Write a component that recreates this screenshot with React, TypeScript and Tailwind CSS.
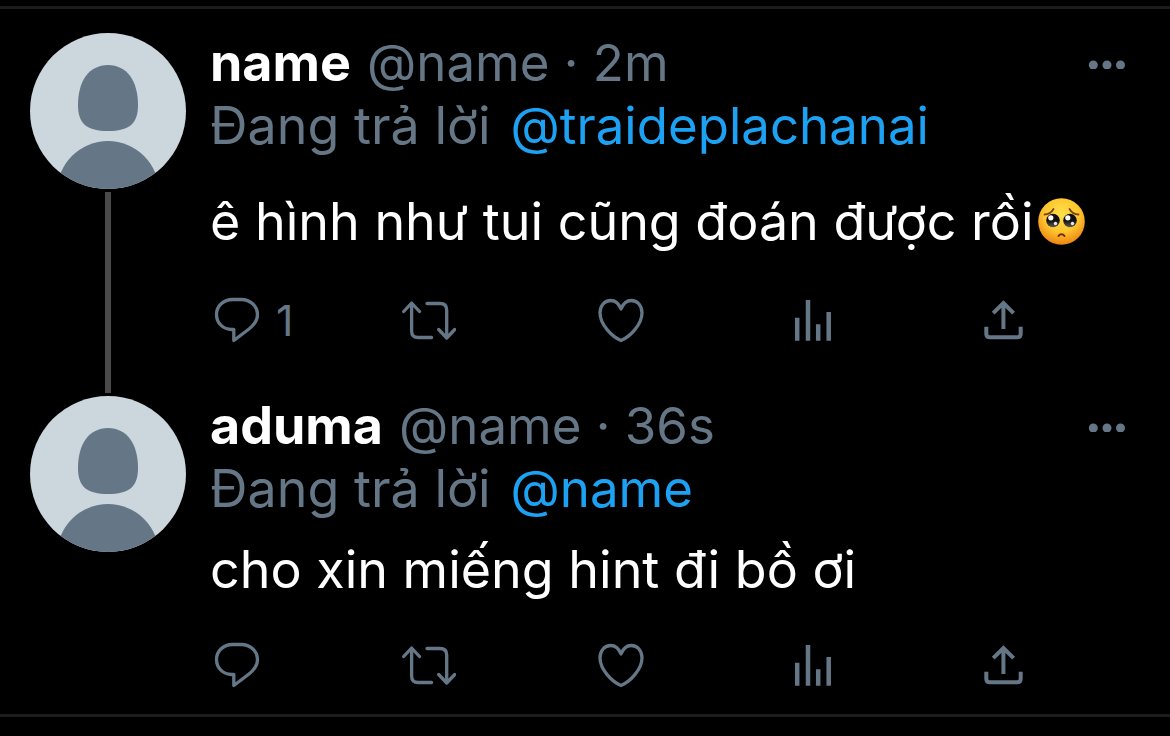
import type { ReactNode } from "react";

type Tweet = {
  id: number;
  name: string;
  handle: string;
  age: string;
  replyingTo: string;
  text: string;
  pleading?: boolean;
  replies?: number;
};

const TWEETS: Tweet[] = [
  {
    id: 1,
    name: "name",
    handle: "@name",
    age: "2m",
    replyingTo: "@traideplachanai",
    text: "ê hình như tui cũng đoán được rồi",
    pleading: true,
    replies: 1,
  },
  { id: 2, name: "aduma", handle: "@name", age: "36s", replyingTo: "@name", text: "cho xin miếng hint đi bồ ơi" },
];

function Avatar() {
  return (
    <svg viewBox="0 0 156 156" className="size-39 shrink-0 rounded-full bg-[#ccd6dd]" aria-hidden>
      <path
        d="M78 32c19 0 30 16 30 40 0 19-9 26-30 26s-30-7-30-26c0-24 11-40 30-40Z"
        fill="#657786"
      />
      <circle cx="78" cy="159" r="51" fill="#657786" />
    </svg>
  );
}

function PleadingFace() {
  return (
    <svg viewBox="0 0 48 48" className="ml-1 inline-block size-12 align-[-6px]" role="img" aria-label="pleading face">
      <defs>
        <radialGradient id="face" cx="0.5" cy="0.35" r="0.68">
          <stop offset="0" stopColor="#ffe04a" />
          <stop offset="0.55" stopColor="#ffc62f" />
          <stop offset="1" stopColor="#ea7d10" />
        </radialGradient>
        <linearGradient id="eye" x1="0" y1="0" x2="0" y2="1">
          <stop offset="0.5" stopColor="#120f10" />
          <stop offset="1" stopColor="#5c5a52" />
        </linearGradient>
      </defs>
      <circle cx="23.5" cy="23.5" r="23.3" fill="url(#face)" />
      <path
        d="M6.500 16.500c4 0 7-2 9-5.500M40.500 16.500c-4 0-7-2-9-5.500"
        fill="none"
        stroke="#7a4308"
        strokeWidth="1.800"
        strokeLinecap="round"
      />
      <circle cx="15" cy="22.500" r="6.800" fill="url(#eye)" />
      <circle cx="32" cy="22.500" r="6.800" fill="url(#eye)" />
      <circle cx="12.800" cy="19.800" r="2.600" fill="#fff" />
      <circle cx="29.800" cy="19.800" r="2.600" fill="#fff" />
      <circle cx="17.500" cy="25.500" r="1.700" fill="#dfe9ef" />
      <circle cx="34.500" cy="25.500" r="1.700" fill="#dfe9ef" />
      <path d="M20.500 38c1.500-2.500 4.500-2.500 6 0" fill="none" stroke="#7a2c08" strokeWidth="2" strokeLinecap="round" />
    </svg>
  );
}

function Icon({ children, strokeWidth = 3.3 }: { children: ReactNode; strokeWidth?: number }) {
  return (
    <svg
      viewBox="0 0 54 48"
      className="h-12 w-[54px] shrink-0"
      fill="none"
      stroke="currentColor"
      strokeWidth={strokeWidth}
      aria-hidden
    >
      {children}
    </svg>
  );
}

function ActionButton({ label, children }: { label: string; children: ReactNode }) {
  return (
    <button type="button" aria-label={label} className="flex items-center gap-3 justify-self-start">
      {children}
    </button>
  );
}

function Actions({ replies }: { replies?: number }) {
  return (
    <div className="grid grid-cols-5 text-[43px] leading-[48px]">
      <ActionButton label="Reply">
        <Icon>
          <path
            d="M22.500 3.500h9C40 3.500 47.500 10 47.500 18.500c0 6-3.500 10.500-8.500 14.500L23.800 44.500v-11h-2C13 33.500 6.500 27 6.500 18.500S13.500 3.500 22.500 3.500Z"
            strokeLinejoin="round"
          />
        </Icon>
        {replies}
      </ActionButton>
      <ActionButton label="Retweet">
        <Icon>
          <path
            d="M1.700 15.500 9.600 7l7.900 8.500M9.600 7.500V35q0 6.500 6.500 6.500h13.500M25 7.500h13q6.700 0 6.700 6.500v27.500M36.700 33.500l8 8.500 8-8.500"
            strokeLinecap="round"
            strokeLinejoin="round"
          />
        </Icon>
      </ActionButton>
      <ActionButton label="Like">
        <Icon>
          <path
            d="M27 13C25 8 21.500 4.500 16.800 4.500 10.500 4.500 6 9.800 6 16.800 6 29 18.500 41 27 44.500 35.500 41 48 29 48 16.800 48 9.800 43.500 4.500 37.200 4.500 32.500 4.500 29 8 27 13Z"
            strokeLinejoin="round"
          />
        </Icon>
      </ActionButton>
      <ActionButton label="View analytics">
        <Icon strokeWidth={4.5}>
          <path d="M11.200 21.700v23M22 4v40.700M32.200 28.300v16.400M42.700 16v28.700" />
        </Icon>
      </ActionButton>
      <ActionButton label="Share">
        <Icon strokeWidth={4}>
          <path d="M8.300 30.700v7q0 3.600 3.600 3.600h27.200q3.600 0 3.600-3.600v-7M25.400 33V7.500M15.200 17.200 25.400 7l10.200 10.200" />
        </Icon>
      </ActionButton>
    </div>
  );
}

function TweetRow({ tweet, last }: { tweet: Tweet; last: boolean }) {
  return (
    <article className="flex gap-6 pl-[30px]">
      <div className="flex flex-col items-center gap-[3px] pt-0.5">
        <Avatar />
        {!last && <div className="mb-px w-1.5 grow bg-[#4a4a4a]" />}
      </div>

      <div className={last ? "min-w-0 grow pb-[25px]" : "min-w-0 grow pb-[50px]"}>
        <header className="flex items-center justify-between pr-11">
          <div className="flex gap-4 whitespace-nowrap">
            <h2 className="text-[52px] font-bold text-white">{tweet.name}</h2>
            <span>
              {tweet.handle} · {tweet.age}
            </span>
          </div>
          <button type="button" aria-label="More">
            <svg viewBox="0 0 38 12" className="h-3 w-[38px]" fill="currentColor" aria-hidden>
              <circle cx="5.300" cy="8" r="4.500" />
              <circle cx="19" cy="8" r="4.500" />
              <circle cx="32.500" cy="8" r="4.500" />
            </svg>
          </button>
        </header>
        <p className="flex gap-5 whitespace-nowrap">
          <span className="text-[52px]">Đang trả lời</span>
          <a href="#" className="text-[#1da1f2]">
            {tweet.replyingTo}
          </a>
        </p>
        <p
          className={
            tweet.pleading
              ? "mt-[33px] mb-[43px] text-[52px] text-white"
              : "mt-[18px] mb-10 text-[52px] text-white"
          }
        >
          {tweet.text}
          {tweet.pleading && <PleadingFace />}
        </p>
        <Actions replies={tweet.replies} />
      </div>
    </article>
  );
}

export default function App() {
  return (
    <main className="min-h-screen bg-black pt-1.5 font-['Inter','Noto_Sans',sans-serif] text-[51px] leading-[63px] text-[#657786]">
      <div className="border-y-3 border-[#1c1c1c] pt-[22px]">
        {TWEETS.map((tweet, i) => (
          <TweetRow key={tweet.id} tweet={tweet} last={i === TWEETS.length - 1} />
        ))}
      </div>
    </main>
  );
}
